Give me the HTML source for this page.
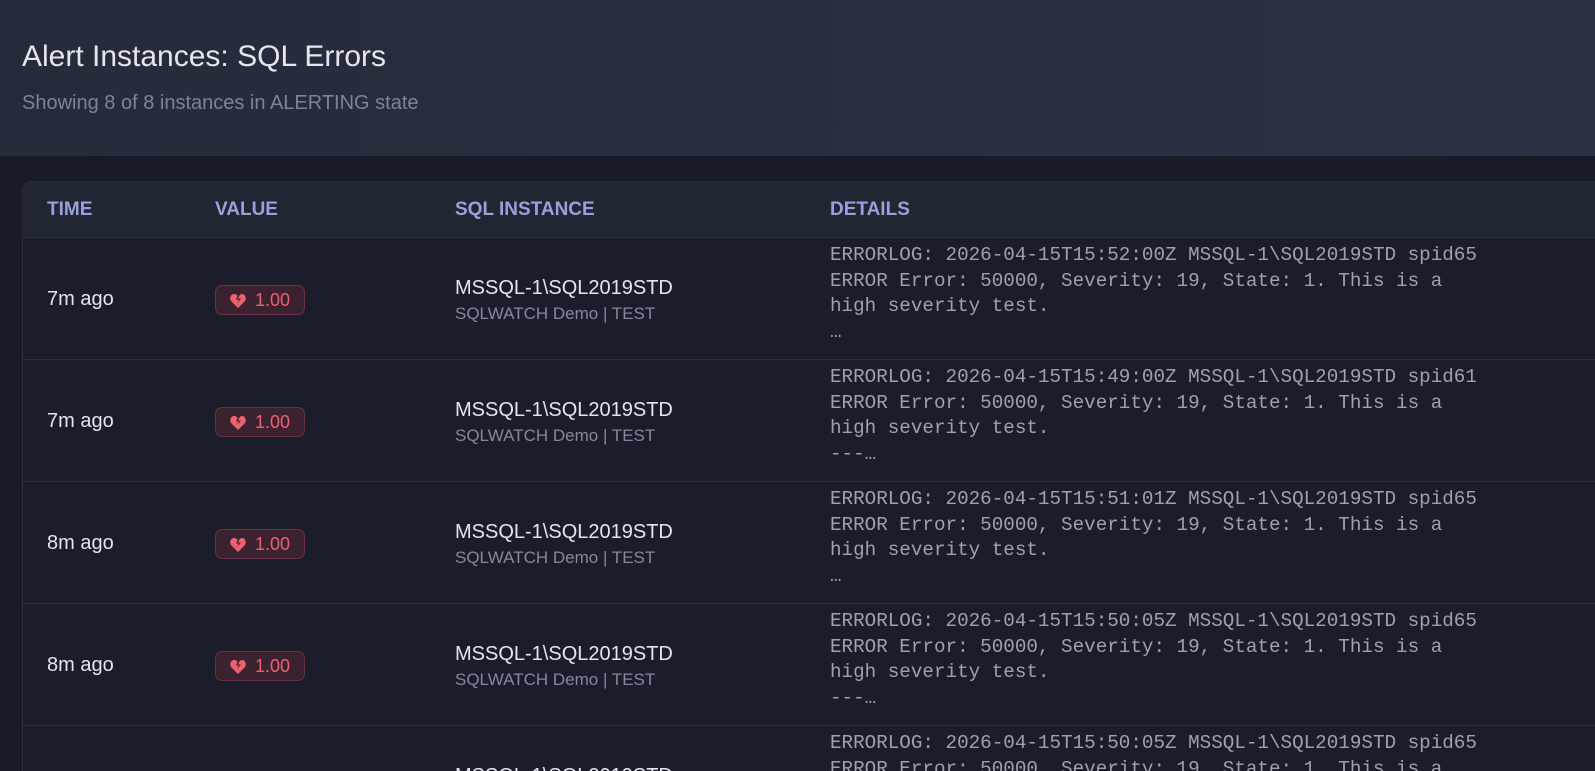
<!DOCTYPE html>
<html style="overflow:hidden;height:771px"><head><style>
body{margin:0;width:1595px;height:771px;overflow:hidden;position:relative;background:#191c26;font-family:"Liberation Sans",sans-serif;}
.top{height:156px;background:linear-gradient(90deg,#262b3a,#2c3243);}
.top h1{margin:0;position:absolute;left:22px;top:40px;font-size:30px;font-weight:normal;color:#e4e7ee;}
.top p{margin:0;position:absolute;left:22px;top:92px;font-size:20px;color:#7d8496;}
.card{position:absolute;left:22px;top:181px;width:1600px;height:600px;background:#1b1e2a;border:1px solid #2a2f3d;border-radius:10px;overflow:hidden;}
.hd{height:55px;background:#212633;position:relative;}
.hd span{position:absolute;top:17px;font-size:19px;font-weight:bold;color:#9aa0dd;}
.row{height:121px;border-top:1px solid #2c3140;position:relative;}
.t{position:absolute;left:24px;top:50px;font-size:20px;color:#e3e6ec;}
.b{position:absolute;left:192px;top:47px;width:90px;height:30px;box-sizing:border-box;border:1px solid #6a2f3b;background:#3b2230;border-radius:7px;color:#f0606e;font-size:18px;line-height:28px;}
.b svg{position:absolute;left:14px;top:7px}
.b i{font-style:normal;position:absolute;left:39px;}
.i1{position:absolute;left:432px;top:39px;font-size:20px;color:#e3e6ec;}
.i2{position:absolute;left:432px;top:66px;font-size:17px;color:#848a9a;}
.d{position:absolute;left:807px;top:5px;font-family:"Liberation Mono",monospace;font-size:19.25px;line-height:25.5px;color:#9da2ad;white-space:pre;}
</style></head><body>
<div class="top"><h1>Alert Instances: SQL Errors</h1><p>Showing 8 of 8 instances in ALERTING state</p></div>
<div class="card">
<div class="hd"><span style="left:24px">TIME</span><span style="left:192px">VALUE</span><span style="left:432px">SQL INSTANCE</span><span style="left:807px">DETAILS</span></div>
<div class="row"><div class="t">7m ago</div><div class="b"><svg width="16" height="15" viewBox="0 0 16 15"><path d="M8 15L1.5 8.5C-1 6 .5 1 4 1c1.6 0 2.8.8 3.6 1.8L6 6.5h3l-2 4 4-5H8l1.4-3C10.2 1.6 11 1 12 1c3.5 0 5 5 2.5 7.5z" fill="#f0606e"/></svg><i>1.00</i></div><div class="i1">MSSQL-1\SQL2019STD</div><div class="i2">SQLWATCH Demo | TEST</div><div class="d">ERRORLOG: 2026-04-15T15:52:00Z MSSQL-1\SQL2019STD spid65
ERROR Error: 50000, Severity: 19, State: 1. This is a
high severity test.
…</div></div>
<div class="row"><div class="t">7m ago</div><div class="b"><svg width="16" height="15" viewBox="0 0 16 15"><path d="M8 15L1.5 8.5C-1 6 .5 1 4 1c1.6 0 2.8.8 3.6 1.8L6 6.5h3l-2 4 4-5H8l1.4-3C10.2 1.6 11 1 12 1c3.5 0 5 5 2.5 7.5z" fill="#f0606e"/></svg><i>1.00</i></div><div class="i1">MSSQL-1\SQL2019STD</div><div class="i2">SQLWATCH Demo | TEST</div><div class="d">ERRORLOG: 2026-04-15T15:49:00Z MSSQL-1\SQL2019STD spid61
ERROR Error: 50000, Severity: 19, State: 1. This is a
high severity test.
---…</div></div>
<div class="row"><div class="t">8m ago</div><div class="b"><svg width="16" height="15" viewBox="0 0 16 15"><path d="M8 15L1.5 8.5C-1 6 .5 1 4 1c1.6 0 2.8.8 3.6 1.8L6 6.5h3l-2 4 4-5H8l1.4-3C10.2 1.6 11 1 12 1c3.5 0 5 5 2.5 7.5z" fill="#f0606e"/></svg><i>1.00</i></div><div class="i1">MSSQL-1\SQL2019STD</div><div class="i2">SQLWATCH Demo | TEST</div><div class="d">ERRORLOG: 2026-04-15T15:51:01Z MSSQL-1\SQL2019STD spid65
ERROR Error: 50000, Severity: 19, State: 1. This is a
high severity test.
…</div></div>
<div class="row"><div class="t">8m ago</div><div class="b"><svg width="16" height="15" viewBox="0 0 16 15"><path d="M8 15L1.5 8.5C-1 6 .5 1 4 1c1.6 0 2.8.8 3.6 1.8L6 6.5h3l-2 4 4-5H8l1.4-3C10.2 1.6 11 1 12 1c3.5 0 5 5 2.5 7.5z" fill="#f0606e"/></svg><i>1.00</i></div><div class="i1">MSSQL-1\SQL2019STD</div><div class="i2">SQLWATCH Demo | TEST</div><div class="d">ERRORLOG: 2026-04-15T15:50:05Z MSSQL-1\SQL2019STD spid65
ERROR Error: 50000, Severity: 19, State: 1. This is a
high severity test.
---…</div></div>
<div class="row"><div class="t">8m ago</div><div class="b"><svg width="16" height="15" viewBox="0 0 16 15"><path d="M8 15L1.5 8.5C-1 6 .5 1 4 1c1.6 0 2.8.8 3.6 1.8L6 6.5h3l-2 4 4-5H8l1.4-3C10.2 1.6 11 1 12 1c3.5 0 5 5 2.5 7.5z" fill="#f0606e"/></svg><i>1.00</i></div><div class="i1">MSSQL-1\SQL2019STD</div><div class="i2">SQLWATCH Demo | TEST</div><div class="d">ERRORLOG: 2026-04-15T15:50:05Z MSSQL-1\SQL2019STD spid65
ERROR Error: 50000, Severity: 19, State: 1. This is a
high severity test.
---…</div></div>
</div>
</body></html>
